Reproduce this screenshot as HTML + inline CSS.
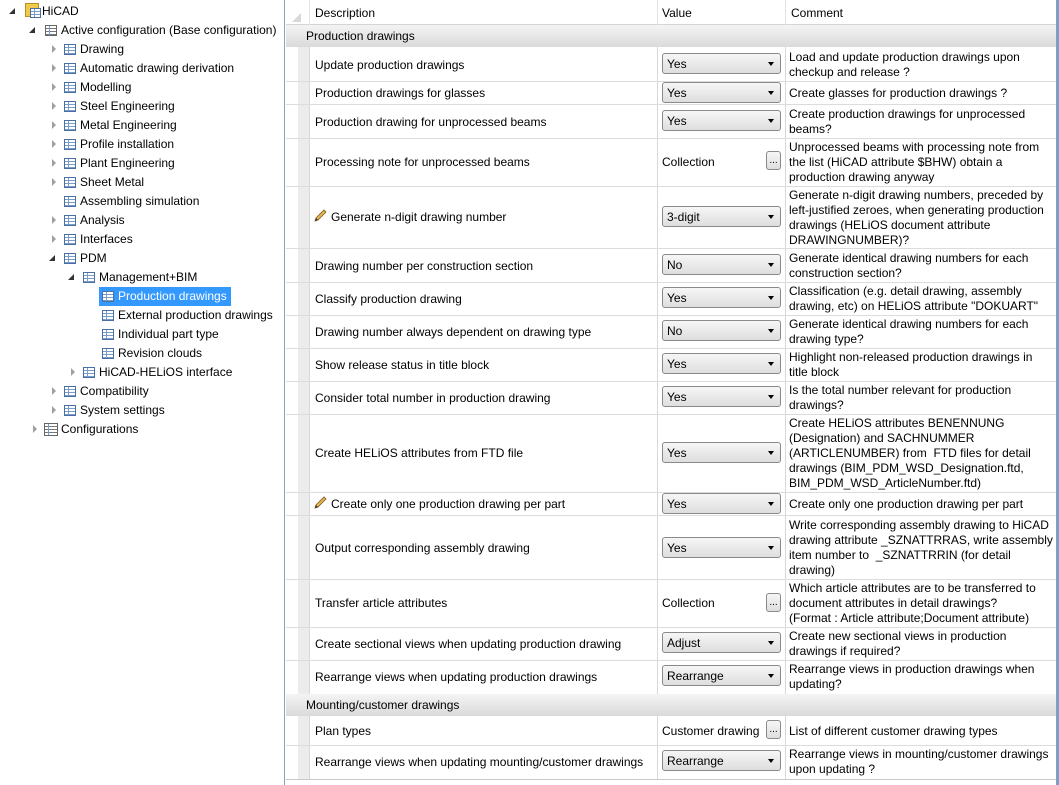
<!DOCTYPE html>
<html><head><meta charset="utf-8"><style>
*{margin:0;padding:0;box-sizing:border-box}
body{width:1059px;height:785px;overflow:hidden;background:#fff;font-family:"Liberation Sans",sans-serif;font-size:12px;color:#000;position:relative}
.a{position:absolute;white-space:nowrap}
.ti{position:absolute;height:19px;line-height:19px;white-space:nowrap;font-size:12px;margin-top:1px}
.ic{position:absolute;width:12px;height:11px;border:1px solid #4a6fa5;background:repeating-linear-gradient(#fff 0 2px,#7a9cc8 2px 3px);}
.ic:after{content:"";position:absolute;left:3px;top:0;bottom:0;width:1px;background:#7a9cc8}
.ar{position:absolute;width:0;height:0;border-top:4px solid transparent;border-bottom:4px solid transparent;border-left:4px solid #a0a0a0}
.ad{position:absolute;width:0;height:0;border-left:6px solid transparent;border-bottom:6px solid #333}
.hl{position:absolute;left:286px;right:3px;height:1px;background:#dcdcdc}
.dd{position:absolute;left:662px;width:119px;height:21px;border:1px solid #8a8a8a;border-radius:3px;background:linear-gradient(#f6f6f6,#dedede);padding-left:4px;line-height:20px}
.dd:after{content:"";position:absolute;right:6px;top:8px;border-left:3.5px solid transparent;border-right:3.5px solid transparent;border-top:4px solid #000}
.bt{position:absolute;left:766px;width:15px;height:19px;border:1px solid #8a8a8a;border-radius:3px;background:linear-gradient(#f6f6f6,#dedede);font-size:10px;text-align:center;line-height:17px}
.d{position:absolute;left:315px;line-height:15px;margin-top:1px}
.c{position:absolute;left:789px;line-height:15px;white-space:nowrap;margin-top:1px}
.v{position:absolute;left:662px;margin-top:1px}
.g{position:absolute;left:286px;width:770px;height:22px;background:linear-gradient(#f4f4f4,#dadada);line-height:23px;padding-left:20px}
.pen{position:absolute;left:314px;width:13px;height:13px}
</style></head><body>
<!-- left panel -->
<div class="a" style="left:284px;top:0;width:1px;height:785px;background:#8aa2c4"></div>
<div class="ad" style="left:9px;top:8px"></div>
<div class="a" style="left:25px;top:3px;width:14px;height:14px;background:#f0c84a;border:1px solid #b8902a"></div>
<div class="ic" style="left:30px;top:8px;width:11px;height:10px"></div>
<div class="ti" style="left:42px;top:1px">HiCAD</div>
<div class="ad" style="left:29px;top:27px"></div>
<div class="ic" style="left:45px;top:25px;border-color:#666;background:repeating-linear-gradient(#fff 0 2px,#777 2px 3px)"></div>
<div class="ti" style="left:61px;top:20px">Active configuration (Base configuration)</div>

<div class="ar" style="left:52px;top:45px"></div><div class="ic" style="left:64px;top:44px"></div><div class="ti" style="left:80px;top:39px">Drawing</div>
<div class="ar" style="left:52px;top:64px"></div><div class="ic" style="left:64px;top:63px"></div><div class="ti" style="left:80px;top:58px">Automatic drawing derivation</div>
<div class="ar" style="left:52px;top:83px"></div><div class="ic" style="left:64px;top:82px"></div><div class="ti" style="left:80px;top:77px">Modelling</div>
<div class="ar" style="left:52px;top:102px"></div><div class="ic" style="left:64px;top:101px"></div><div class="ti" style="left:80px;top:96px">Steel Engineering</div>
<div class="ar" style="left:52px;top:121px"></div><div class="ic" style="left:64px;top:120px"></div><div class="ti" style="left:80px;top:115px">Metal Engineering</div>
<div class="ar" style="left:52px;top:140px"></div><div class="ic" style="left:64px;top:139px"></div><div class="ti" style="left:80px;top:134px">Profile installation</div>
<div class="ar" style="left:52px;top:159px"></div><div class="ic" style="left:64px;top:158px"></div><div class="ti" style="left:80px;top:153px">Plant Engineering</div>
<div class="ar" style="left:52px;top:178px"></div><div class="ic" style="left:64px;top:177px"></div><div class="ti" style="left:80px;top:172px">Sheet Metal</div>
<div class="ic" style="left:64px;top:196px"></div><div class="ti" style="left:80px;top:191px">Assembling simulation</div>
<div class="ar" style="left:52px;top:216px"></div><div class="ic" style="left:64px;top:215px"></div><div class="ti" style="left:80px;top:210px">Analysis</div>
<div class="ar" style="left:52px;top:235px"></div><div class="ic" style="left:64px;top:234px"></div><div class="ti" style="left:80px;top:229px">Interfaces</div>
<div class="ad" style="left:49px;top:255px"></div><div class="ic" style="left:64px;top:253px"></div><div class="ti" style="left:80px;top:248px">PDM</div>
<div class="ad" style="left:68px;top:274px"></div><div class="ic" style="left:83px;top:272px"></div><div class="ti" style="left:99px;top:267px">Management+BIM</div>
<div class="a" style="left:99px;top:287px;width:132px;height:19px;background:#3399ff"></div>
<div class="ic" style="left:102px;top:291px"></div><div class="ti" style="left:118px;top:286px;color:#fff">Production drawings</div>
<div class="ic" style="left:102px;top:310px"></div><div class="ti" style="left:118px;top:305px">External production drawings</div>
<div class="ic" style="left:102px;top:329px"></div><div class="ti" style="left:118px;top:324px">Individual part type</div>
<div class="ic" style="left:102px;top:348px"></div><div class="ti" style="left:118px;top:343px">Revision clouds</div>
<div class="ar" style="left:71px;top:368px"></div><div class="ic" style="left:83px;top:367px"></div><div class="ti" style="left:99px;top:362px">HiCAD-HELiOS interface</div>
<div class="ar" style="left:52px;top:387px"></div><div class="ic" style="left:64px;top:386px"></div><div class="ti" style="left:80px;top:381px">Compatibility</div>
<div class="ar" style="left:52px;top:406px"></div><div class="ic" style="left:64px;top:405px"></div><div class="ti" style="left:80px;top:400px">System settings</div>
<div class="ar" style="left:33px;top:425px"></div><div class="ic" style="left:44px;top:423px;width:14px;height:13px;border-color:#666;background:repeating-linear-gradient(#fff 0 2px,#777 2px 3px)"></div><div class="ti" style="left:61px;top:419px">Configurations</div>

<!-- right panel -->
<div class="a" style="left:1056px;top:0;width:3px;height:785px;background:#7e9ec8"></div>
<div class="a" style="left:286px;top:779px;width:770px;height:6px;background:#fff;border-top:1px solid #c8c8c8"></div>
<div class="a" style="left:286px;top:0;width:770px;height:25px;background:#fff;border-bottom:1px solid #d5d5d5"></div>
<div class="a" style="left:657px;top:0;width:1px;height:25px;background:#e3e3e3"></div>
<div class="a" style="left:785px;top:0;width:1px;height:25px;background:#e3e3e3"></div>
<div class="a" style="left:309px;top:0;width:1px;height:25px;background:#e3e3e3"></div>
<div class="a" style="left:292px;top:13px;border-left:9px solid transparent;border-bottom:9px solid #d8d8d8"></div>
<div class="a" style="left:315px;top:6px">Description</div>
<div class="a" style="left:662px;top:6px">Value</div>
<div class="a" style="left:791px;top:6px">Comment</div>

<div class="g" style="top:25px">Production drawings</div>
<div class="g" style="top:694px">Mounting/customer drawings</div>

<div class="a" style="left:298px;top:47px;width:11px;height:647px;background:#ececec"></div>
<div class="a" style="left:298px;top:716px;width:11px;height:63px;background:#ececec"></div>
<div class="a" style="left:309px;top:47px;width:1px;height:647px;background:#d8d8d8"></div>
<div class="a" style="left:309px;top:716px;width:1px;height:63px;background:#d8d8d8"></div>
<div class="a" style="left:657px;top:47px;width:1px;height:647px;background:#d8d8d8"></div>
<div class="a" style="left:657px;top:716px;width:1px;height:63px;background:#d8d8d8"></div>
<div class="a" style="left:785px;top:47px;width:1px;height:647px;background:#d8d8d8"></div>
<div class="a" style="left:785px;top:716px;width:1px;height:63px;background:#d8d8d8"></div>

<div class="hl" style="top:81px"></div><div class="hl" style="top:104px"></div><div class="hl" style="top:138px"></div><div class="hl" style="top:186px"></div><div class="hl" style="top:248px"></div><div class="hl" style="top:282px"></div><div class="hl" style="top:315px"></div><div class="hl" style="top:348px"></div><div class="hl" style="top:381px"></div><div class="hl" style="top:414px"></div><div class="hl" style="top:492px"></div><div class="hl" style="top:515px"></div><div class="hl" style="top:579px"></div><div class="hl" style="top:627px"></div><div class="hl" style="top:660px"></div><div class="hl" style="top:745px"></div>

<div class="d" style="top:57px">Update production drawings</div><div class="dd" style="top:53px">Yes</div><div class="c" style="top:49px">Load and update production drawings upon<br>checkup and release ?</div>
<div class="d" style="top:85px">Production drawings for glasses</div><div class="dd" style="top:82px">Yes</div><div class="c" style="top:85px">Create glasses for production drawings ?</div>
<div class="d" style="top:114px">Production drawing for unprocessed beams</div><div class="dd" style="top:110px">Yes</div><div class="c" style="top:106px">Create production drawings for unprocessed<br>beams?</div>
<div class="d" style="top:154px">Processing note for unprocessed beams</div><div class="v" style="top:154px">Collection</div><div class="bt" style="top:151px">...</div><div class="c" style="top:139px">Unprocessed beams with processing note from<br>the list (HiCAD attribute $BHW) obtain a<br>production drawing anyway</div>
<svg class="pen" style="top:209px" viewBox="0 0 13 13"><path d="M1 12 L2 9 L10 1 L12 3 L4 11 Z" fill="#e8b84a" stroke="#7a5a20" stroke-width="0.8"/><path d="M1 12 L2 9 L4 11Z" fill="#333"/></svg>
<div class="d" style="top:209px;left:331px">Generate n-digit drawing number</div><div class="dd" style="top:206px">3-digit</div><div class="c" style="top:187px">Generate n-digit drawing numbers, preceded by<br>left-justified zeroes, when generating production<br>drawings (HELiOS document attribute<br>DRAWINGNUMBER)?</div>
<div class="d" style="top:258px">Drawing number per construction section</div><div class="dd" style="top:254px">No</div><div class="c" style="top:250px">Generate identical drawing numbers for each<br>construction section?</div>
<div class="d" style="top:291px">Classify production drawing</div><div class="dd" style="top:287px">Yes</div><div class="c" style="top:283px">Classification (e.g. detail drawing, assembly<br>drawing, etc) on HELiOS attribute "DOKUART"</div>
<div class="d" style="top:324px">Drawing number always dependent on drawing type</div><div class="dd" style="top:320px">No</div><div class="c" style="top:316px">Generate identical drawing numbers for each<br>drawing type?</div>
<div class="d" style="top:357px">Show release status in title block</div><div class="dd" style="top:353px">Yes</div><div class="c" style="top:349px">Highlight non-released production drawings in<br>title block</div>
<div class="d" style="top:390px">Consider total number in production drawing</div><div class="dd" style="top:386px">Yes</div><div class="c" style="top:382px">Is the total number relevant for production<br>drawings?</div>
<div class="d" style="top:445px">Create HELiOS attributes from FTD file</div><div class="dd" style="top:442px">Yes</div><div class="c" style="top:415px">Create HELiOS attributes BENENNUNG<br>(Designation) and SACHNUMMER<br>(ARTICLENUMBER) from &nbsp;FTD files for detail<br>drawings (BIM_PDM_WSD_Designation.ftd,<br>BIM_PDM_WSD_ArticleNumber.ftd)</div>
<svg class="pen" style="top:496px" viewBox="0 0 13 13"><path d="M1 12 L2 9 L10 1 L12 3 L4 11 Z" fill="#e8b84a" stroke="#7a5a20" stroke-width="0.8"/><path d="M1 12 L2 9 L4 11Z" fill="#333"/></svg>
<div class="d" style="top:496px;left:331px">Create only one production drawing per part</div><div class="dd" style="top:493px">Yes</div><div class="c" style="top:496px">Create only one production drawing per part</div>
<div class="d" style="top:540px">Output corresponding assembly drawing</div><div class="dd" style="top:537px">Yes</div><div class="c" style="top:517px">Write corresponding assembly drawing to HiCAD<br>drawing attribute _SZNATTRRAS, write assembly<br>item number to &nbsp;_SZNATTRRIN (for detail<br>drawing)</div>
<div class="d" style="top:595px">Transfer article attributes</div><div class="v" style="top:595px">Collection</div><div class="bt" style="top:593px">...</div><div class="c" style="top:580px">Which article attributes are to be transferred to<br>document attributes in detail drawings?<br>(Format : Article attribute;Document attribute)</div>
<div class="d" style="top:636px">Create sectional views when updating production drawing</div><div class="dd" style="top:632px">Adjust</div><div class="c" style="top:628px">Create new sectional views in production<br>drawings if required?</div>
<div class="d" style="top:669px">Rearrange views when updating production drawings</div><div class="dd" style="top:665px">Rearrange</div><div class="c" style="top:661px">Rearrange views in production drawings when<br>updating?</div>
<div class="d" style="top:723px">Plan types</div><div class="v" style="top:723px">Customer drawing</div><div class="bt" style="top:720px">...</div><div class="c" style="top:723px">List of different customer drawing types</div>
<div class="d" style="top:754px">Rearrange views when updating mounting/customer drawings</div><div class="dd" style="top:750px">Rearrange</div><div class="c" style="top:746px">Rearrange views in mounting/customer drawings<br>upon updating ?</div>
</body></html>
